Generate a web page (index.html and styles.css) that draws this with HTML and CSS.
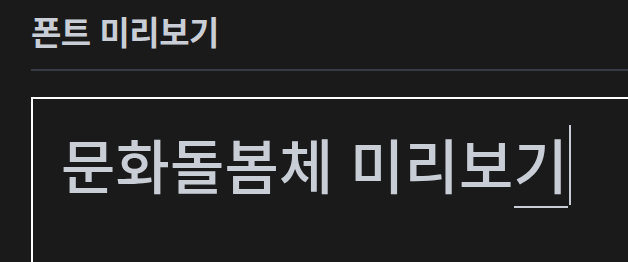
FILE: index.html
```html
<!DOCTYPE html>
<html lang="ko">
<head>
<meta charset="utf-8">
<link rel="stylesheet" href="styles.css">
</head>
<body>
<main class="panel">
  <h2 class="title">폰트 미리보기</h2>
  <div class="preview"><span class="text">문화돌봄체 미리보<span class="composing">기</span></span><span class="caret"></span></div>
</main>
</body>
</html>
```
FILE: styles.css
```css
html, body {
  margin: 0;
  padding: 0;
  background: #1a1a1a;
  overflow: hidden;
}
.panel {
  padding: 0 0 0 31px;
  font-family: "Noto Sans CJK KR", "Noto Sans", sans-serif;
  color: #c9ced6;
  height: 262px;
  overflow: hidden;
}
.title {
  margin: 0;
  padding-top: 9px;
  font-size: 33px;
  font-weight: 700;
  line-height: 44px;
  height: 71px;
  box-sizing: border-box;
  border-bottom: 2px solid #363b43;
  letter-spacing: -0.5px;
}
.preview {
  margin-top: 26px;
  border: 2px solid #ffffff;
  border-right: none;
  height: 200px;
  padding: 26px 0 0 28px;
  display: flex;
  align-items: flex-start;
}
.text {
  font-size: 59px;
  font-weight: 500;
  line-height: 78px;
  letter-spacing: 0.2px;
  white-space: nowrap;
}
.composing {
  border-bottom: 2px solid #c9ced6;
}
.caret {
  width: 2px;
  height: 80px;
  margin-left: 1px;
  background: #c9ced6;
}
```
